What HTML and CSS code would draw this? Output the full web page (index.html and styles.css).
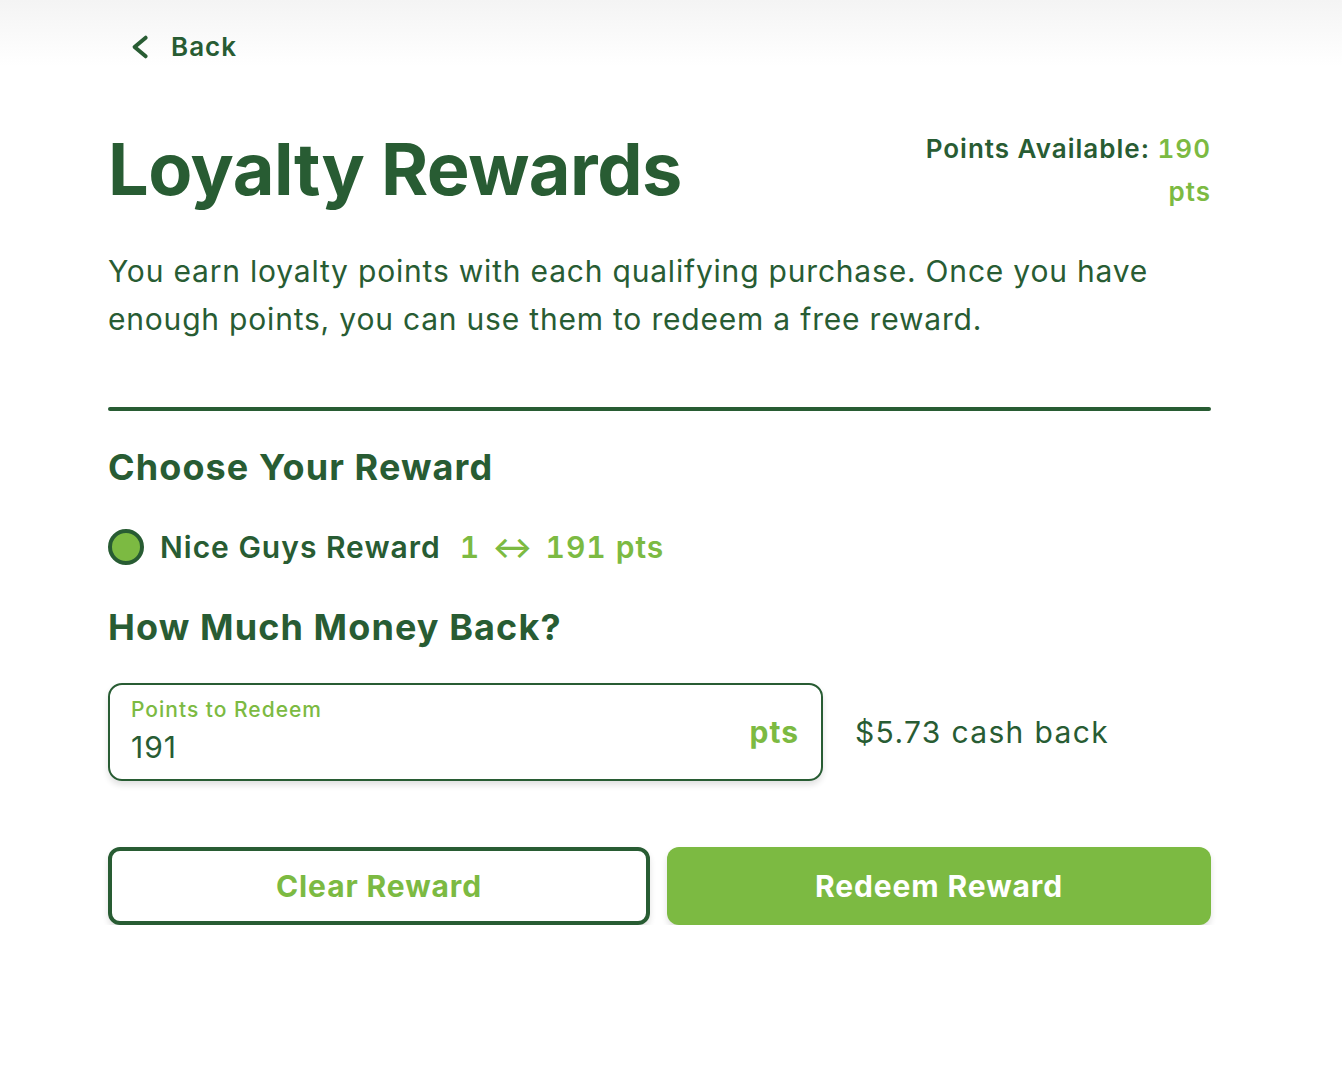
FILE: index.html
```html
<!DOCTYPE html>
<html lang="en">

<head>
    <meta charset="UTF-8">
    <meta name="viewport" content="width=device-width, initial-scale=1.0">
    <title>Loyalty Rewards</title>
    <link rel="stylesheet" href="styles.css">
</head>

<body>
    <header class="top-bar">
        <a class="back-link" href="#">
            <svg class="back-icon" viewBox="0 0 24 24" width="28" height="28">
                <path d="M16 4 L6.5 12 L16 20" fill="none" stroke="currentColor" stroke-width="3.4" stroke-linecap="round" stroke-linejoin="round"></path>
            </svg>
            <span>Back</span>
        </a>
    </header>

    <main class="page">
        <div class="title-row">
            <h1 class="title">Loyalty Rewards</h1>
            <div class="points-available">Points Available: <span class="accent">190 pts</span></div>
        </div>

        <p class="intro">You earn loyalty points with each qualifying purchase. Once you have enough points, you can use them to redeem a free reward.</p>

        <hr class="divider">

        <h2 class="section-title">Choose Your Reward</h2>

        <label class="reward-option">
            <span class="radio"></span>
            <span class="reward-name">Nice Guys Reward</span>
            <span class="reward-range">1 <span class="arrow">↔</span> 191 pts</span>
        </label>

        <h2 class="section-title money">How Much Money Back?</h2>

        <div class="redeem-row">
            <div class="points-field">
                <div class="field-text">
                    <div class="field-label">Points to Redeem</div>
                    <div class="field-value">191</div>
                </div>
                <div class="field-unit">pts</div>
            </div>
            <div class="cash-back">$5.73 cash back</div>
        </div>

        <div class="actions">
            <button class="btn btn-outline">Clear Reward</button>
            <button class="btn btn-solid">Redeem Reward</button>
        </div>
    </main>
</body>

</html>
```

FILE: styles.css
```css
body {
    font-family: 'Inter', 'Liberation Sans', sans-serif;
    letter-spacing: 1px;
    margin: 0;
    background: #ffffff;
    color: #285c33;
}

.top-bar {
    height: 66px;
    background: linear-gradient(to bottom, #f4f4f4, #ffffff);
    padding-left: 127px;
    display: flex;
    align-items: flex-start;
}

.back-link {
    display: flex;
    align-items: center;
    gap: 16px;
    margin-top: 31px;
    color: #285c33;
    text-decoration: none;
    font-size: 26px;
    font-weight: 600;
}

.back-icon {
    display: block;
}

.page {
    width: 1103px;
    margin-left: 108px;
}

.title-row {
    display: flex;
    justify-content: space-between;
    align-items: flex-start;
    margin-top: 58px;
}

.title {
    margin: 0;
    font-size: 72px;
    font-weight: 700;
    line-height: 90px;
    letter-spacing: -0.5px;
}

.points-available {
    width: 300px;
    text-align: right;
    font-size: 26px;
    font-weight: 600;
    line-height: 43px;
    margin-top: 3px;
}

.accent {
    color: #7cba42;
    font-variant-numeric: tabular-nums;
}

.intro {
    margin: 33px 0 0;
    font-size: 30px;
    line-height: 48px;
    font-weight: 400;
    letter-spacing: 0.8px;
}

.divider {
    border: none;
    height: 4px;
    border-radius: 2px;
    background: #285c33;
    margin: 64px 0 0;
}

.section-title {
    margin: 34px 0 0;
    font-size: 36px;
    font-weight: 700;
    line-height: 44px;
    letter-spacing: 1.1px;
}

.reward-option {
    display: flex;
    align-items: center;
    margin-top: 40px;
    font-size: 30px;
    font-weight: 600;
}

.radio {
    width: 28px;
    height: 28px;
    border: 4px solid #285c33;
    border-radius: 50%;
    background: #7cba42;
    margin-right: 16px;
}

.reward-range {
    color: #7cba42;
    margin-left: 19px;
    font-variant-numeric: tabular-nums;
}

.arrow {
    margin: 0 3px;
}

.section-title.money {
    margin-top: 40px;
}

.redeem-row {
    display: flex;
    align-items: center;
    gap: 32px;
    margin-top: 34px;
}

.points-field {
    width: 668px;
    height: 94px;
    border: 2px solid #285c33;
    border-radius: 14px;
    box-shadow: 0 4px 6px rgba(0, 0, 0, 0.12);
    display: flex;
    justify-content: space-between;
    align-items: center;
    padding: 0 22px 0 21px;
}

.field-label {
    color: #7cba42;
    font-size: 21px;
    font-weight: 500;
    line-height: 26px;
}

.field-value {
    font-size: 30px;
    line-height: 40px;
    margin-top: 4px;
}

.field-unit {
    color: #7cba42;
    font-size: 30px;
    font-weight: 700;
}

.cash-back {
    font-size: 30px;
    letter-spacing: 1.35px;
}

.actions {
    display: flex;
    gap: 17px;
    margin-top: 66px;
}

.btn {
    height: 78px;
    border-radius: 12px;
    font-family: inherit;
    font-size: 30px;
    font-weight: 700;
    letter-spacing: 0.9px;
    box-shadow: 0 4px 6px rgba(0, 0, 0, 0.12);
    cursor: pointer;
}

.btn-outline {
    width: 542px;
    background: #ffffff;
    border: 4px solid #285c33;
    color: #7cba42;
}

.btn-solid {
    width: 544px;
    background: #7cba42;
    border: none;
    color: #ffffff;
}
```
